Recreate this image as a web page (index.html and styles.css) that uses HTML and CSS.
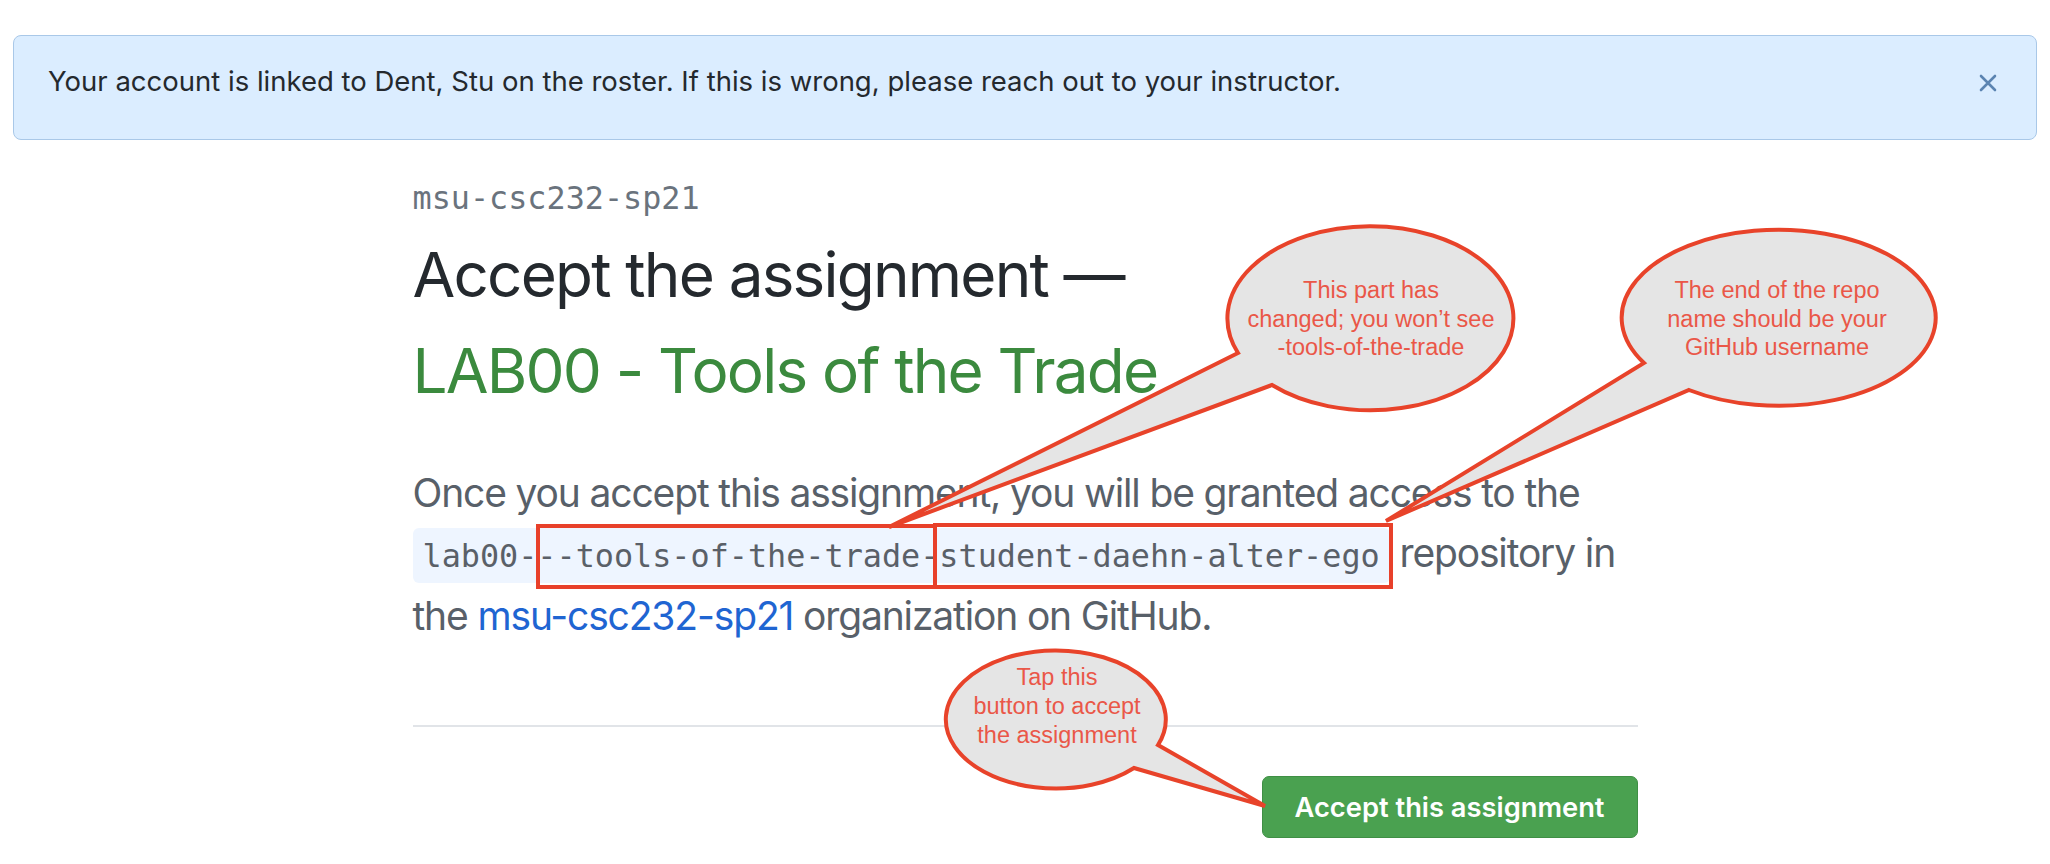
FILE: index.html
```html
<!DOCTYPE html>
<html lang="en">
<head>
<meta charset="utf-8">
<title>Accept the assignment</title>
<link rel="stylesheet" href="styles.css">
</head>
<body>
<div class="flash">
  <span class="flash-text">Your account is linked to Dent, Stu on the roster. If this is wrong, please reach out to your instructor.</span>
  <button class="flash-close" aria-label="Dismiss">
    <svg width="18" height="18" viewBox="0 0 18 18"><path d="M2 2 L16 16 M16 2 L2 16" stroke="#5b84b1" stroke-width="2.6" stroke-linecap="round" fill="none"/></svg>
  </button>
</div>
<main class="main">
  <div class="org">msu-csc232-sp21</div>
  <h1 class="title">Accept the assignment —<span class="title-name">LAB00 - Tools of the Trade</span></h1>
  <p class="lead">Once you accept this assignment, you will be granted access to the <code class="repo">lab00---tools-of-the-trade-student-daehn-alter-ego</code> repository in the <a class="org-link" href="#">msu-csc232-sp21</a> organization on GitHub.</p>
  <hr class="divider">
  <div class="actions"><button class="btn-accept">Accept this assignment</button></div>
</main>
<svg class="annotations" width="2050" height="864" viewBox="0 0 2050 864">
  <rect x="538" y="526" width="397" height="61" class="hl"/>
  <rect x="935" y="525" width="456" height="62" class="hl"/>
  <path class="bubble" d="M1238 353 A143 92 0 1 1 1272 385 L889 527 Z"/>
  <path class="bubble" d="M1644 363 A157 88 0 1 1 1689 390 L1386 521 Z"/>
  <path class="bubble" d="M1134 768 A110 69 0 1 1 1158 745 L1265 806 Z"/>
  <text class="note" x="1371" y="298">This part has</text>
  <text class="note" x="1371" y="327">changed; you won’t see</text>
  <text class="note" x="1371" y="355">-tools-of-the-trade</text>
  <text class="note" x="1777" y="298">The end of the repo</text>
  <text class="note" x="1777" y="327">name should be your</text>
  <text class="note" x="1777" y="355">GitHub username</text>
  <text class="note" x="1057" y="685">Tap this</text>
  <text class="note" x="1057" y="714">button to accept</text>
  <text class="note" x="1057" y="743">the assignment</text>
</svg>
</body>
</html>
```

FILE: styles.css
```css
html, body {
  margin: 0;
  padding: 0;
  background: #ffffff;
}

body {
  position: relative;
  font-family: Inter, "Liberation Sans", sans-serif;
  color: #24292e;
}

.flash {
  box-sizing: border-box;
  height: 105px;
  margin: 35px 13px 0;
  padding: 25px 39px 0 34px;
  display: flex;
  align-items: flex-start;
  justify-content: space-between;
  background: #dbedff;
  border: 1px solid #a9c8e8;
  border-radius: 8px;
}

.flash-text {
  font-size: 27.5px;
  line-height: 40px;
  color: #24292e;
}

.flash-close {
  margin-top: 13px;
  width: 18px;
  height: 18px;
  padding: 0;
  border: 0;
  background: none;
  display: flex;
}

.main {
  width: 1225px;
  margin: 0 auto;
}

.org {
  margin-top: 34px;
  font-family: "DejaVu Sans Mono", "Liberation Mono", monospace;
  font-size: 31.8px;
  line-height: 48px;
  color: #6a737d;
}

.title {
  margin: 5px 0 0;
  font-family: Inter, "Liberation Sans", sans-serif;
  font-weight: 400;
  font-size: 62px;
  letter-spacing: -1.8px;
  line-height: 96px;
  color: #24292e;
}

.title-name {
  display: block;
  color: #3b8a3e;
}

.lead {
  margin: 44px 0 0;
  font-size: 39px;
  letter-spacing: -1.15px;
  line-height: 60px;
  color: #586069;
}

.repo {
  font-family: "DejaVu Sans Mono", "Liberation Mono", monospace;
  font-size: 31.8px;
  letter-spacing: 0;
  padding: 9px 10px;
  background: #eef5ff;
  border-radius: 6px;
  color: #5a6068;
}

.org-link {
  color: #1f65d2;
  text-decoration: none;
}

.divider {
  margin: 79px 0 0;
  height: 2px;
  border: 0;
  background: #e1e4e8;
}

.actions {
  display: flex;
  justify-content: flex-end;
  margin-top: 49px;
}

.btn-accept {
  box-sizing: border-box;
  width: 376px;
  height: 62px;
  border: 1px solid #3f8f45;
  border-radius: 7px;
  background: #4aa150;
  color: #ffffff;
  font-family: Inter, "Liberation Sans", sans-serif;
  font-weight: 600;
  font-size: 27.3px;
  letter-spacing: 0;
}

.annotations {
  position: absolute;
  left: 0;
  top: 0;
  pointer-events: none;
}

.hl {
  fill: none;
  stroke: #e8402a;
  stroke-width: 4;
}

.bubble {
  fill: #e5e5e5;
  stroke: #e8432a;
  stroke-width: 4;
  stroke-linejoin: miter;
}

.note {
  font-family: "Liberation Sans", Arial, sans-serif;
  font-size: 23.5px;
  fill: #ea5748;
  text-anchor: middle;
}
```
